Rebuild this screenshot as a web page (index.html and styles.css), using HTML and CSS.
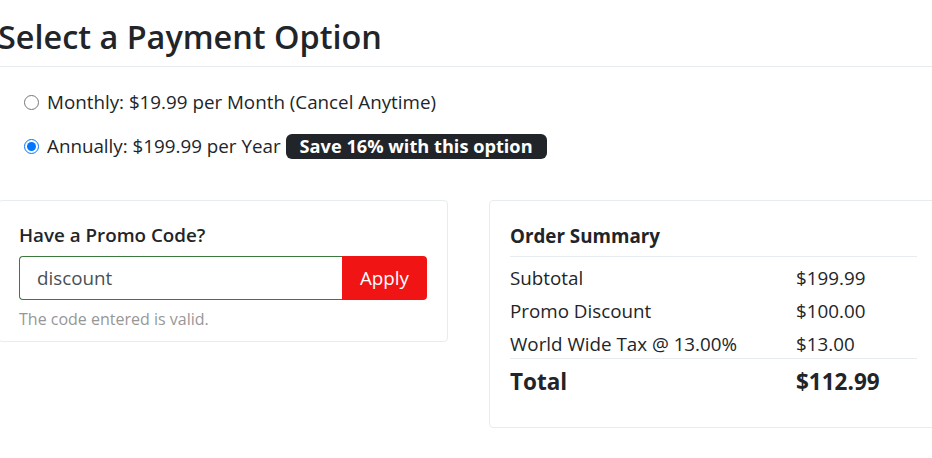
FILE: index.html
```html
<!DOCTYPE html>
<html lang="en">
<head>
<meta charset="utf-8">
<title>Select a Payment Option</title>
<link rel="stylesheet" href="styles.css">
</head>
<body>
<div class="page">
  <h2 class="title">Select a Payment Option</h2>
  <hr class="rule">
  <div class="options">
    <label class="option"><input type="radio" name="plan"> <span>Monthly: $19.99 per Month (Cancel Anytime)</span></label>
    <label class="option"><input type="radio" name="plan" checked> <span>Annually: $199.99 per Year</span> <span class="badge">Save 16% with this option</span></label>
  </div>
  <div class="cards">
    <div class="card promo">
      <h5 class="card-title">Have a Promo Code?</h5>
      <div class="input-group">
        <input class="code" type="text" value="discount">
        <button class="apply" type="button">Apply</button>
      </div>
      <div class="help">The code entered is valid.</div>
    </div>
    <div class="card summary">
      <h5 class="card-title summary-title">Order Summary</h5>
      <div class="lines">
        <div class="line">
          <div class="label">Subtotal</div><div class="value">$199.99</div>
        </div>
        <div class="line">
          <div class="label">Promo Discount</div><div class="value">$100.00</div>
        </div>
        <div class="line">
          <div class="label">World Wide Tax @ 13.00%</div><div class="value">$13.00</div>
        </div>
      </div>
      <div class="line total">
        <div class="label">Total</div><div class="value">$112.99</div>
      </div>
    </div>
  </div>
</div>
</body>
</html>
```

FILE: styles.css
```css
html, body {
  margin: 0;
  padding: 0;
  background: #fff;
  overflow: hidden;
}
body {
  font-family: "Open Sans", "Noto Sans", sans-serif;
  color: #212529;
  font-size: 18.8px;
  line-height: 1.5;
}
.page {
  width: 940px;
  margin-left: -2px;
}
.title {
  margin: 0;
  padding-top: 17px;
  font-size: 32.4px;
  font-weight: 600;
  line-height: 38px;
  color: #212529;
}
.rule {
  margin: 11px 0 0;
  border: 0;
  border-top: 1px solid #e9ecef;
}
.options {
  padding: 22px 0 0 26px;
  display: flex;
  flex-direction: column;
  gap: 17px;
}
.option {
  display: flex;
  align-items: center;
  gap: 8px;
  line-height: 27px;
}
.option input {
  margin: 0;
  width: 15px;
  height: 15px;
  accent-color: #0075ff;
}
.badge {
  display: inline-block;
  background: #212529;
  color: #fff;
  font-weight: 700;
  font-size: 18.2px;
  line-height: 25px;
  padding: 0 14px;
  border-radius: 6px;
  margin-left: -3px;
}
.cards {
  margin-top: 40px;
  display: grid;
  grid-template-columns: 450px 449px;
  column-gap: 41px;
  align-items: start;
}
.card {
  border: 1px solid #e9ecef;
  border-radius: 4px;
  padding: 20px;
}
.promo {
  padding-bottom: 14px;
}
.card-title {
  margin: 0;
  font-size: 18.8px;
  font-weight: 600;
  line-height: 27px;
  padding-top: 1px;
}
.input-group {
  display: flex;
  margin-top: 7px;
  height: 44px;
}
.code {
  flex: 1;
  min-width: 0;
  box-sizing: border-box;
  height: 44px;
  margin: 0;
  border: 1px solid #3b7a3f;
  border-right: 0;
  border-radius: 4px 0 0 4px;
  padding: 0 17px;
  font-family: inherit;
  font-size: 18.8px;
  color: #495057;
  outline: none;
}
.apply {
  width: 85px;
  height: 44px;
  margin: 0;
  border: 0;
  border-radius: 0 4px 4px 0;
  background: #f01414;
  color: #fff;
  font-family: inherit;
  font-size: 18.8px;
  padding: 0;
}
.help {
  margin-top: 11px;
  font-size: 16px;
  line-height: 16px;
  color: #979797;
}
.summary {
  padding-bottom: 29px;
}
.summary-title {
  font-weight: 700;
  padding-top: 2px;
  padding-bottom: 6px;
  border-bottom: 1px solid #e9ecef;
}
.lines {
  padding-top: 2px;
}
.line {
  display: grid;
  grid-template-columns: 286px 1fr;
  line-height: 28px;
  padding-top: 5px;
}
.line.total {
  border-top: 1px solid #e9ecef;
  font-weight: 700;
  font-size: 22.5px;
  line-height: 33px;
  padding-top: 6px;
}
```
